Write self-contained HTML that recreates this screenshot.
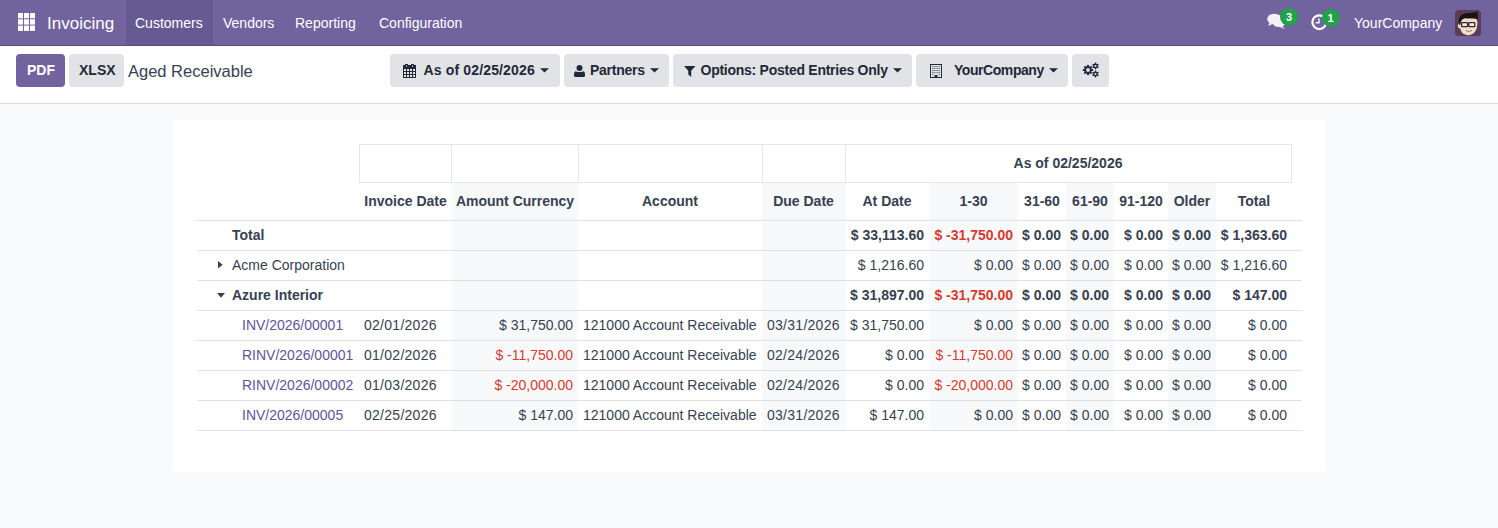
<!DOCTYPE html>
<html><head><meta charset="utf-8">
<style>
*{box-sizing:border-box;margin:0;padding:0}
html,body{width:1498px;height:528px;overflow:hidden;background:#f9fafb;font-family:"Liberation Sans",sans-serif;color:#374151;font-size:14px}
.nav{position:absolute;left:0;top:0;width:1498px;height:46px;background:#71639e;border-bottom:1px solid #574b81}
.nav .t{position:absolute;color:#fff;white-space:nowrap;line-height:20px}
.nav .act{position:absolute;left:126px;top:0;width:87px;height:45px;background:#665a92}
.cp{position:absolute;left:0;top:46px;width:1498px;height:58px;background:#fff;border-bottom:1px solid #d8dadd}
.btn{position:absolute;top:8px;height:33px;border-radius:4px;background:#e1e3e7;white-space:nowrap}
.btn .t{position:absolute;top:6px;line-height:20px;font-weight:bold;color:#1f2937}
.sheet{position:absolute;left:173px;top:120px;width:1153px;height:351px;background:#fff}
.abs{position:absolute;white-space:nowrap;line-height:20px}
.b{font-weight:bold}
.sh{position:absolute;top:182px;height:249px;background:#f8f9fa}
.h1{position:absolute;top:144px;height:39px;border:1px solid #e4e7ea}
.vd{position:absolute;top:144px;height:39px;width:1px;background:#e4e7ea}
.hr{position:absolute;left:197px;width:1105px;height:1px;background:#dee2e6}
.ic{position:absolute}
.badge{position:absolute;width:18px;height:18px;border-radius:9px;background:#22a249;color:#fff;font-size:11px;font-weight:bold;line-height:18px;text-align:center}
</style></head><body>
<div class="nav">
  <svg style="position:absolute;left:18px;top:13px" width="17" height="18" viewBox="0 0 17 18" fill="#fff">
    <rect x="0" y="0" width="5" height="5.3"/><rect x="6" y="0" width="5" height="5.3"/><rect x="12" y="0" width="5" height="5.3"/>
    <rect x="0" y="6.3" width="5" height="5.3"/><rect x="6" y="6.3" width="5" height="5.3"/><rect x="12" y="6.3" width="5" height="5.3"/>
    <rect x="0" y="12.6" width="5" height="5.3"/><rect x="6" y="12.6" width="5" height="5.3"/><rect x="12" y="12.6" width="5" height="5.3"/>
  </svg>
  <div class="t" style="left:47px;top:14px;font-size:17px">Invoicing</div>
  <div class="act"></div>
  <div class="t" style="left:135px;top:13px">Customers</div>
  <div class="t" style="left:223px;top:13px">Vendors</div>
  <div class="t" style="left:295px;top:13px">Reporting</div>
  <div class="t" style="left:379px;top:13px">Configuration</div>
  <div class="t" style="left:1354px;top:13px">YourCompany</div>
  <!-- chat -->
  <svg style="position:absolute;left:1267px;top:13px" width="19" height="17" viewBox="0 0 19 17" fill="#f3f1f7">
    <ellipse cx="7.5" cy="6" rx="7.3" ry="5.2"/>
    <path d="M2.5 9.5 L1.3 13 L6 10.8Z"/>
    <ellipse cx="12" cy="10.2" rx="6" ry="3.8"/>
    <path d="M14.5 12.5 L17.8 16 L11.5 13.6Z"/>
  </svg>
  <div class="badge" style="left:1280px;top:8px">3</div>
  <!-- clock -->
  <svg style="position:absolute;left:1311px;top:13px" width="17" height="18" viewBox="0 0 17 18">
    <circle cx="8.3" cy="9.2" r="6.9" fill="none" stroke="#fff" stroke-width="2.2"/>
    <path d="M8 5.5 V9.8 H4.8" fill="none" stroke="#fff" stroke-width="1.4"/>
  </svg>
  <div class="badge" style="left:1321.5px;top:9px">1</div>
  <!-- avatar -->
  <svg style="position:absolute;left:1455px;top:10px" width="26" height="26" viewBox="0 0 26 26">
    <rect width="26" height="26" rx="3.5" fill="#5b3b55"/>
    <ellipse cx="4.6" cy="15.8" rx="1.8" ry="2.6" fill="#f2d2bb"/>
    <path d="M5 13 Q4.8 21 8 23.5 Q11 25.5 14 25.2 Q19.5 24.5 21.5 19 Q23 14 22 9 L6 8Z" fill="#f6dcc8"/>
    <path d="M4 14.5 Q2.8 7 7 4.5 Q11 2.5 15 3 Q19 2.8 22.5 1.5 Q22 3.5 23 4.5 Q23.5 8 21.8 10 Q21 7.5 18.5 7.8 Q14 8.5 9.5 8.2 Q7 9 6 11.5 Q5.5 13 5.2 15Z" fill="#161616"/>
    <rect x="6.6" y="12.6" width="6" height="4" rx="0.6" fill="#fff" fill-opacity="0.35" stroke="#2b2b2b" stroke-width="1.3"/>
    <rect x="13.8" y="12.6" width="6" height="4" rx="0.6" fill="#fff" fill-opacity="0.35" stroke="#2b2b2b" stroke-width="1.3"/>
    <path d="M11 20.5 Q14 22.5 17 20.5" fill="#fff" stroke="#8a5a50" stroke-width="0.9"/>
  </svg>
</div>
<div class="cp">
  <div class="btn" style="left:16px;width:49px;background:#71639e"><div class="t" style="left:11px;color:#fff">PDF</div></div>
  <div class="btn" style="left:69px;width:55px"><div class="t" style="left:10px">XLSX</div></div>
  <div class="abs" style="left:128px;top:15px;font-size:16.5px;color:#374151">Aged Receivable</div>
  <div class="btn" style="left:390px;width:170px"><div class="t" style="left:33.5px;letter-spacing:0.15px">As of 02/25/2026</div></div>
  <div class="btn" style="left:564px;width:105px"><div class="t" style="left:26px;letter-spacing:-0.27px">Partners</div></div>
  <div class="btn" style="left:673px;width:239px"><div class="t" style="left:27.5px;letter-spacing:-0.26px">Options: Posted Entries Only</div></div>
  <div class="btn" style="left:916px;width:152px"><div class="t" style="left:38px;letter-spacing:-0.44px">YourCompany</div></div>
  <div class="btn" style="left:1072px;width:37px"></div>
</div>
<!-- calendar -->
<svg class="ic" style="left:403px;top:64px" width="13" height="14" viewBox="0 0 13 14" shape-rendering="crispEdges">
  <path fill="#1f2937" fill-rule="evenodd" d="M0 1H13V14H0Z M1 5H3V7H1Z M4 5H6V7H4Z M7 5H9V7H7Z M10 5H12V7H10Z M1 8H3V10H1Z M4 8H6V10H4Z M7 8H9V10H7Z M10 8H12V10H10Z M1 11H3V13H1Z M4 11H6V13H4Z M7 11H9V13H7Z M10 11H12V13H10Z"/>
  <rect x="2" y="0" width="3" height="3" fill="#1f2937"/><rect x="8" y="0" width="3" height="3" fill="#1f2937"/>
  <rect x="3" y="0.5" width="1" height="2" fill="#8aa0b8"/><rect x="9" y="0.5" width="1" height="2" fill="#8aa0b8"/>
</svg>
<svg class="ic" style="left:540px;top:68px" width="9" height="5" viewBox="0 0 9 5"><path d="M0 0.2H9L4.5 4.4Z" fill="#1f2937"/></svg>
<!-- user -->
<svg class="ic" style="left:574px;top:65px" width="11" height="12" viewBox="0 0 11 12" fill="#1f2937">
  <circle cx="5.5" cy="3" r="3"/>
  <path d="M1.5 6.2 Q5.5 8 9.5 6.2 Q11 7 11 9 V10.5 Q11 12 9.5 12 H1.5 Q0 12 0 10.5 V9 Q0 7 1.5 6.2Z"/>
</svg>
<svg class="ic" style="left:650px;top:68px" width="9" height="5" viewBox="0 0 9 5"><path d="M0 0.2H9L4.5 4.4Z" fill="#1f2937"/></svg>
<!-- filter -->
<svg class="ic" style="left:684px;top:66px" width="12" height="11" viewBox="0 0 12 11" fill="#1f2937">
  <path d="M0 0H11.5L7.2 4.8V11L4.3 8.6V4.8Z"/>
</svg>
<svg class="ic" style="left:893px;top:68px" width="9" height="5" viewBox="0 0 9 5"><path d="M0 0.2H9L4.5 4.4Z" fill="#1f2937"/></svg>
<!-- building -->
<svg class="ic" style="left:930px;top:64px" width="12" height="14" viewBox="0 0 12 14">
  <path fill="#1f2937" fill-rule="evenodd" d="M0 0H12V14H0Z M1 1H11V13H1Z"/>
  <g fill="#1f2937" fill-opacity="0.75"><rect x="2.3" y="2" width="1.1" height="1.1"/><rect x="4.3" y="2" width="1.1" height="1.1"/><rect x="6.5" y="2" width="1.1" height="1.1"/><rect x="8.6" y="2" width="1.1" height="1.1"/><rect x="2.3" y="4" width="1.1" height="1.1"/><rect x="4.3" y="4" width="1.1" height="1.1"/><rect x="6.5" y="4" width="1.1" height="1.1"/><rect x="8.6" y="4" width="1.1" height="1.1"/><rect x="2.3" y="6" width="1.1" height="1.1"/><rect x="4.3" y="6" width="1.1" height="1.1"/><rect x="6.5" y="6" width="1.1" height="1.1"/><rect x="8.6" y="6" width="1.1" height="1.1"/><rect x="2.3" y="8" width="1.1" height="1.1"/><rect x="4.3" y="8" width="1.1" height="1.1"/><rect x="6.5" y="8" width="1.1" height="1.1"/><rect x="8.6" y="8" width="1.1" height="1.1"/><rect x="2.3" y="10" width="1.1" height="1.1"/><rect x="8.6" y="10" width="1.1" height="1.1"/></g>
  <rect x="4.5" y="11" width="3" height="2.2" fill="#1f2937"/>
</svg>
<svg class="ic" style="left:1049px;top:68px" width="9" height="5" viewBox="0 0 9 5"><path d="M0 0.2H9L4.5 4.4Z" fill="#1f2937"/></svg>
<!-- gears -->
<svg class="ic" style="left:1082px;top:62px" width="18" height="16" viewBox="0 0 18 16" fill="#1f2937">
  <g transform="translate(6,8)">
    <circle r="3.7" />
    <g><rect x="-1" y="-5.1" width="2" height="10.2"/><rect x="-1" y="-5.1" width="2" height="10.2" transform="rotate(45)"/><rect x="-1" y="-5.1" width="2" height="10.2" transform="rotate(90)"/><rect x="-1" y="-5.1" width="2" height="10.2" transform="rotate(135)"/></g>
    <circle r="1.9" fill="#e1e3e7"/>
  </g>
  <g transform="translate(13.5,4)">
    <circle r="2.4"/>
    <g><rect x="-0.7" y="-3.4" width="1.4" height="6.8"/><rect x="-0.7" y="-3.4" width="1.4" height="6.8" transform="rotate(60)"/><rect x="-0.7" y="-3.4" width="1.4" height="6.8" transform="rotate(120)"/></g>
    <circle r="1.1" fill="#e1e3e7"/>
  </g>
  <g transform="translate(13.5,12)">
    <circle r="2.4"/>
    <g><rect x="-0.7" y="-3.4" width="1.4" height="6.8"/><rect x="-0.7" y="-3.4" width="1.4" height="6.8" transform="rotate(60)"/><rect x="-0.7" y="-3.4" width="1.4" height="6.8" transform="rotate(120)"/></g>
    <circle r="1.1" fill="#e1e3e7"/>
  </g>
</svg>
<div class="sheet"></div>
<div class="sh" style="left:452px;width:126px"></div>
<div class="sh" style="left:762px;width:84px"></div>
<div class="sh" style="left:929px;width:89px"></div>
<div class="sh" style="left:1066px;width:48px"></div>
<div class="sh" style="left:1168px;width:48px"></div>
<div class="h1" style="left:359px;width:933px"></div>
<div class="vd" style="left:451px"></div>
<div class="vd" style="left:578px"></div>
<div class="vd" style="left:762px"></div>
<div class="vd" style="left:845px"></div>
<div class="hr" style="top:220px"></div>
<div class="hr" style="top:250px"></div>
<div class="hr" style="top:280px"></div>
<div class="hr" style="top:310px"></div>
<div class="hr" style="top:340px"></div>
<div class="hr" style="top:370px"></div>
<div class="hr" style="top:400px"></div>
<div class="hr" style="top:430px"></div>
<div class="abs b" style="left:845px;width:446px;top:153px;text-align:center">As of 02/25/2026</div>
<div class="abs b" style="left:359px;width:93px;top:191px;text-align:center">Invoice Date</div>
<div class="abs b" style="left:452px;width:126px;top:191px;text-align:center">Amount Currency</div>
<div class="abs b" style="left:578px;width:184px;top:191px;text-align:center">Account</div>
<div class="abs b" style="left:762px;width:83px;top:191px;text-align:center">Due Date</div>
<div class="abs b" style="left:845px;width:84px;top:191px;text-align:center">At Date</div>
<div class="abs b" style="left:929px;width:89px;top:191px;text-align:center">1-30</div>
<div class="abs b" style="left:1018px;width:48px;top:191px;text-align:center">31-60</div>
<div class="abs b" style="left:1066px;width:48px;top:191px;text-align:center">61-90</div>
<div class="abs b" style="left:1114px;width:54px;top:191px;text-align:center">91-120</div>
<div class="abs b" style="left:1168px;width:48px;top:191px;text-align:center">Older</div>
<div class="abs b" style="left:1216px;width:76px;top:191px;text-align:center">Total</div>
<div class="abs b" style="left:232px;top:225px;">Total</div>
<div class="abs b" style="right:574px;top:225px;">$ 33,113.60</div>
<div class="abs b" style="right:485px;top:225px;color:#d63a2f;">$ -31,750.00</div>
<div class="abs b" style="right:437px;top:225px;">$ 0.00</div>
<div class="abs b" style="right:389px;top:225px;">$ 0.00</div>
<div class="abs b" style="right:335px;top:225px;">$ 0.00</div>
<div class="abs b" style="right:287px;top:225px;">$ 0.00</div>
<div class="abs b" style="right:211px;top:225px;">$ 1,363.60</div>
<div class="abs" style="left:232px;top:255px;">Acme Corporation</div>
<svg class="ic" style="left:218px;top:261.3px" width="5" height="8" viewBox="0 0 5 8"><path d="M0 0L4.7 3.7L0 7.4Z" fill="#374151"/></svg>
<div class="abs" style="right:574px;top:255px;">$ 1,216.60</div>
<div class="abs" style="right:485px;top:255px;">$ 0.00</div>
<div class="abs" style="right:437px;top:255px;">$ 0.00</div>
<div class="abs" style="right:389px;top:255px;">$ 0.00</div>
<div class="abs" style="right:335px;top:255px;">$ 0.00</div>
<div class="abs" style="right:287px;top:255px;">$ 0.00</div>
<div class="abs" style="right:211px;top:255px;">$ 1,216.60</div>
<div class="abs b" style="left:232px;top:285px;">Azure Interior</div>
<svg class="ic" style="left:217px;top:292.5px" width="8" height="5" viewBox="0 0 8 5"><path d="M0 0H8L4 4.8Z" fill="#374151"/></svg>
<div class="abs b" style="right:574px;top:285px;">$ 31,897.00</div>
<div class="abs b" style="right:485px;top:285px;color:#d63a2f;">$ -31,750.00</div>
<div class="abs b" style="right:437px;top:285px;">$ 0.00</div>
<div class="abs b" style="right:389px;top:285px;">$ 0.00</div>
<div class="abs b" style="right:335px;top:285px;">$ 0.00</div>
<div class="abs b" style="right:287px;top:285px;">$ 0.00</div>
<div class="abs b" style="right:211px;top:285px;">$ 147.00</div>
<div class="abs" style="left:242px;top:315px;color:#5f5499;">INV/2026/00001</div>
<div class="abs" style="left:364px;top:315px;letter-spacing:0.27px">02/01/2026</div>
<div class="abs" style="right:925px;top:315px;">$ 31,750.00</div>
<div class="abs" style="left:583px;top:315px;">121000 Account Receivable</div>
<div class="abs" style="left:767px;top:315px;letter-spacing:0.27px">03/31/2026</div>
<div class="abs" style="right:574px;top:315px;">$ 31,750.00</div>
<div class="abs" style="right:485px;top:315px;">$ 0.00</div>
<div class="abs" style="right:437px;top:315px;">$ 0.00</div>
<div class="abs" style="right:389px;top:315px;">$ 0.00</div>
<div class="abs" style="right:335px;top:315px;">$ 0.00</div>
<div class="abs" style="right:287px;top:315px;">$ 0.00</div>
<div class="abs" style="right:211px;top:315px;">$ 0.00</div>
<div class="abs" style="left:242px;top:345px;color:#5f5499;">RINV/2026/00001</div>
<div class="abs" style="left:364px;top:345px;letter-spacing:0.27px">01/02/2026</div>
<div class="abs" style="right:925px;top:345px;color:#d63a2f;">$ -11,750.00</div>
<div class="abs" style="left:583px;top:345px;">121000 Account Receivable</div>
<div class="abs" style="left:767px;top:345px;letter-spacing:0.27px">02/24/2026</div>
<div class="abs" style="right:574px;top:345px;">$ 0.00</div>
<div class="abs" style="right:485px;top:345px;color:#d63a2f;">$ -11,750.00</div>
<div class="abs" style="right:437px;top:345px;">$ 0.00</div>
<div class="abs" style="right:389px;top:345px;">$ 0.00</div>
<div class="abs" style="right:335px;top:345px;">$ 0.00</div>
<div class="abs" style="right:287px;top:345px;">$ 0.00</div>
<div class="abs" style="right:211px;top:345px;">$ 0.00</div>
<div class="abs" style="left:242px;top:375px;color:#5f5499;">RINV/2026/00002</div>
<div class="abs" style="left:364px;top:375px;letter-spacing:0.27px">01/03/2026</div>
<div class="abs" style="right:925px;top:375px;color:#d63a2f;">$ -20,000.00</div>
<div class="abs" style="left:583px;top:375px;">121000 Account Receivable</div>
<div class="abs" style="left:767px;top:375px;letter-spacing:0.27px">02/24/2026</div>
<div class="abs" style="right:574px;top:375px;">$ 0.00</div>
<div class="abs" style="right:485px;top:375px;color:#d63a2f;">$ -20,000.00</div>
<div class="abs" style="right:437px;top:375px;">$ 0.00</div>
<div class="abs" style="right:389px;top:375px;">$ 0.00</div>
<div class="abs" style="right:335px;top:375px;">$ 0.00</div>
<div class="abs" style="right:287px;top:375px;">$ 0.00</div>
<div class="abs" style="right:211px;top:375px;">$ 0.00</div>
<div class="abs" style="left:242px;top:405px;color:#5f5499;">INV/2026/00005</div>
<div class="abs" style="left:364px;top:405px;letter-spacing:0.27px">02/25/2026</div>
<div class="abs" style="right:925px;top:405px;">$ 147.00</div>
<div class="abs" style="left:583px;top:405px;">121000 Account Receivable</div>
<div class="abs" style="left:767px;top:405px;letter-spacing:0.27px">03/31/2026</div>
<div class="abs" style="right:574px;top:405px;">$ 147.00</div>
<div class="abs" style="right:485px;top:405px;">$ 0.00</div>
<div class="abs" style="right:437px;top:405px;">$ 0.00</div>
<div class="abs" style="right:389px;top:405px;">$ 0.00</div>
<div class="abs" style="right:335px;top:405px;">$ 0.00</div>
<div class="abs" style="right:287px;top:405px;">$ 0.00</div>
<div class="abs" style="right:211px;top:405px;">$ 0.00</div>
</body></html>
